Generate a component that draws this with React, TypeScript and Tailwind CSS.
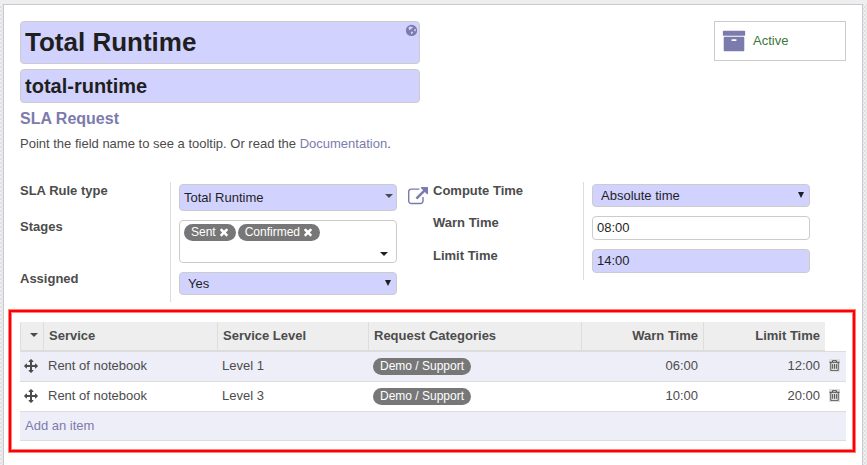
import type { ReactNode } from 'react';

const ICONS = {
  archive:
    'M1088 832q0-26-19-45t-45-19h-256q-26 0-45 19t-19 45 19 45 45 19h256q26 0 45-19t19-45zm576-192v960q0 26-19 45t-45 19h-1408q-26 0-45-19t-19-45v-960q0-26 19-45t45-19h1408q26 0 45 19t19 45zm64-448v256q0 26-19 45t-45 19h-1536q-26 0-45-19t-19-45v-256q0-26 19-45t45-19h1536q26 0 45 19t19 45z',
  move:
    'M1792 896q0 26-19 45l-256 256q-19 19-45 19t-45-19-19-45v-128h-384v384h128q26 0 45 19t19 45-19 45l-256 256q-19 19-45 19t-45-19l-256-256q-19-19-19-45t19-45 45-19h128v-384h-384v128q0 26-19 45t-45 19-45-19l-256-256q-19-19-19-45t19-45l256-256q19-19 45-19t45 19 19 45v128h384v-384h-128q-26 0-45-19t-19-45 19-45l256-256q19-19 45-19t45 19l256 256q19 19 19 45t-19 45-45 19h-128v384h384v-128q0-26 19-45t45-19 45 19l256 256q19 19 19 45z',
  trash:
    'M704 736v576q0 14-9 23t-23 9h-64q-14 0-23-9t-9-23v-576q0-14 9-23t23-9h64q14 0 23 9t9 23zm256 0v576q0 14-9 23t-23 9h-64q-14 0-23-9t-9-23v-576q0-14 9-23t23-9h64q14 0 23 9t9 23zm256 0v576q0 14-9 23t-23 9h-64q-14 0-23-9t-9-23v-576q0-14 9-23t23-9h64q14 0 23 9t9 23zm128 724v-948h-896v948q0 22 7 40.5t14.5 27 10.5 8.5h832q3 0 10.5-8.5t14.5-27 7-40.5zm-672-1076h448l-48-117q-7-9-17-11h-317q-10 2-17 11zm928 32v64q0 14-9 23t-23 9h-96v948q0 83-47 143.5t-113 60.5h-832q-66 0-113-58.5t-47-141.5v-952h-96q-14 0-23-9t-9-23v-64q0-14 9-23t23-9h309l70-167q15-37 54-63t79-26h320q40 0 79 26t54 63l70 167h309q14 0 23 9t9 23z',
  external:
    'M1408 928v320q0 119-84.5 203.5t-203.5 84.5h-832q-119 0-203.5-84.5t-84.5-203.5v-832q0-119 84.5-203.5t203.5-84.5h704q14 0 23 9t9 23v64q0 14-9 23t-23 9h-704q-66 0-113 47t-47 113v832q0 66 47 113t113 47h832q66 0 113-47t47-113v-320q0-14 9-23t23-9h64q14 0 23 9t9 23zm384-864v512q0 26-19 45t-45 19-45-19l-176-176-652 652q-10 10-23 10t-23-10l-114-114q-10-10-10-23t10-23l652-652-176-176q-19-19-19-45t19-45 45-19h512q26 0 45 19t19 45z',
  close:
    'M1490 1322q0 40-28 68l-136 136q-28 28-68 28t-68-28l-294-294-294 294q-28 28-68 28t-68-28l-136-136q-28-28-28-68t28-68l294-294-294-294q-28-28-28-68t28-68l136-136q28-28 68-28t68 28l294 294 294-294q28-28 68-28t68 28l136 136q28 28 28 68t-28 68l-294 294 294 294q28 28 28 68z',
  globe:
    'M896 100a780 780 0 1 0 0 1560a780 780 0 1 0 0-1560zM480 520l180-170 160-20 60 100 170-50 70 90-170 120-110 130-120 40-40 110-130-90zM800 1060l160-40 170 100-40 120-110 60-50 130-90-40-20-150zM1280 720l140-50 80 130-30 170-90 70-110-120z',
};

function Icon({ name, className }: { name: keyof typeof ICONS; className: string }) {
  return (
    <svg viewBox="0 0 1792 1792" className={className} fill="currentColor" fillRule="evenodd" aria-hidden="true">
      <path d={ICONS[name]} />
    </svg>
  );
}

function Caret({ className = '' }: { className?: string }) {
  return (
    <svg viewBox="0 0 8 4" className={`h-1 w-2 ${className}`} fill="currentColor" aria-hidden="true">
      <path d="M0 0h8L4 4z" />
    </svg>
  );
}

const box = 'w-full rounded-[4px] border border-[#ccc] text-[#1f1f1f] outline-none';

function Row({ label, id, children }: { label: string; id: string; children: ReactNode }) {
  return (
    <div className="flex">
      <label htmlFor={id} className="w-[150px] flex-none font-bold leading-[17px]">
        {label}
      </label>
      <div className="flex min-w-0 grow border-l border-[#ddd] pt-[2px] pb-[7px] pl-2">{children}</div>
    </div>
  );
}

function Select({ id, value }: { id: string; value: string }) {
  return (
    <div className="relative w-[218px] flex-none">
      <select id={id} defaultValue={value} className={`${box} h-[23px] appearance-none bg-[#d2d2ff] pr-5 pl-2`}>
        <option>{value}</option>
      </select>
      <svg
        viewBox="0 0 6 6"
        className="pointer-events-none absolute top-2 right-[6px] size-[6px]"
        fill="#1f1f1f"
        aria-hidden="true"
      >
        <path d="M0 0h6L3 6z" />
      </svg>
    </div>
  );
}

function Tag({ text, removable = false }: { text: string; removable?: boolean }) {
  return (
    <span className="inline-flex h-[17px] items-center gap-[3px] rounded-full bg-[#777] px-[7px] align-middle text-xs leading-[17px] text-white">
      {text}
      {removable && (
        <button type="button" aria-label={`Remove ${text}`} className="pb-px">
          <Icon name="close" className="-mx-px size-3" />
        </button>
      )}
    </span>
  );
}

const lines = [
  { service: 'Rent of notebook', level: 'Level 1', category: 'Demo / Support', warn: '06:00', limit: '12:00' },
  { service: 'Rent of notebook', level: 'Level 3', category: 'Demo / Support', warn: '10:00', limit: '20:00' },
];

const th = 'border-b border-l border-[#ddd] bg-[#eee] px-[5px] pb-[2px]';
const td = 'border-b border-[#ddd] px-[5px] pb-[2px]';

function Lines() {
  return (
    <table className="w-full table-fixed border-separate border-spacing-0 text-left leading-[17px]">
      <colgroup>
        <col className="w-[23px]" />
        <col className="w-[174px]" />
        <col className="w-[151px]" />
        <col />
        <col className="w-[122px]" />
        <col className="w-[122px]" />
        <col className="w-[21px]" />
      </colgroup>
      <thead>
        <tr>
          <th className="h-[29px] border-b border-l border-[#ddd] bg-[#eee] pb-[2px] pl-[9px]">
            <Caret />
          </th>
          <th className={th}>Service</th>
          <th className={th}>Service Level</th>
          <th className={th}>Request Categories</th>
          <th className={`${th} text-right`}>Warn Time</th>
          <th className={`${th} text-right`}>Limit Time</th>
          <td />
        </tr>
      </thead>
      <tbody>
        <tr>
          <td colSpan={7} className="h-px bg-[#ddd] p-0" />
        </tr>
        {lines.map((line) => (
          <tr key={line.level} className="odd:bg-white even:bg-[#eeeef8]">
            <td className="h-[30px] border-b border-[#ddd] pb-[2px] pl-1">
              <Icon name="move" className="size-[14px]" />
            </td>
            <td className={td}>{line.service}</td>
            <td className={td}>{line.level}</td>
            <td className={td}>
              <Tag text={line.category} />
            </td>
            <td className={`${td} text-right`}>{line.warn}</td>
            <td className={`${td} text-right`}>{line.limit}</td>
            <td className="border-b border-[#ddd] pb-[2px] pl-1">
              <button type="button" aria-label="Delete" className="flex h-[13px] w-[11px] items-center justify-center bg-[#ddd]">
                <Icon name="trash" className="size-[13px] flex-none" />
              </button>
            </td>
          </tr>
        ))}
        <tr className="bg-[#eeeef8]">
          <td colSpan={7} className={`${td} h-[29px]`}>
            <a href="#add" className="text-[#7c7bad]">
              Add an item
            </a>
          </td>
        </tr>
      </tbody>
    </table>
  );
}

export default function App() {
  return (
    <div className="flex min-h-screen flex-col bg-[#eee] bg-[repeating-conic-gradient(#e0e0e0_0_25%,#f0f0f0_0_50%)] bg-size-[4px_4px] font-['Liberation_Sans',Arial,sans-serif] text-[13px] text-[#4c4c4c]">
      <div className="h-1 bg-[#eee]" />
      <main className="mr-1 ml-[3px] grow border border-b-0 border-[#c8c8d3] bg-white px-4 pt-4">
        <header className="flex items-start justify-between">
          <div className="w-[400px]">
            <div className="relative">
              <input
                aria-label="Name"
                defaultValue="Total Runtime"
                className={`${box} block h-[43px] bg-[#d2d2ff] pr-6 pl-1 text-[26px] font-bold`}
              />
              <button type="button" aria-label="Translate" className="absolute top-[3px] right-[2px] text-[#7c7bad]">
                <Icon name="globe" className="size-[13px]" />
              </button>
            </div>
            <input
              aria-label="Code"
              defaultValue="total-runtime"
              className={`${box} mt-[5px] block h-[34px] bg-[#d2d2ff] px-1 text-xl font-bold`}
            />
            <h2 className="mt-[6px] text-base leading-5 font-bold text-[#7c7bad]">SLA Request</h2>
            <p className="mt-[5px] leading-5">
              Point the field name to see a tooltip. Or read the{' '}
              <a href="#documentation" className="text-[#7c7bad]">
                Documentation
              </a>
              .
            </p>
          </div>
          <button
            type="button"
            className="flex h-10 w-[132px] items-center gap-[7px] border border-[#ccc] pl-[7px] text-[#3c763d]"
          >
            <Icon name="archive" className="size-6 text-[#7c7bad]" />
            Active
          </button>
        </header>

        <div className="mt-7 grid grid-cols-2 items-start">
          <section>
            <Row label="SLA Rule type" id="rule-type">
              <div className="relative w-[218px] flex-none">
                <input
                  id="rule-type"
                  defaultValue="Total Runtime"
                  className={`${box} block h-[27px] bg-[#d2d2ff] pr-5 pl-1`}
                />
                <Caret className="pointer-events-none absolute top-[10px] right-1" />
              </div>
              <button type="button" aria-label="Open rule type" className="ml-[11px] flex-none pb-[2px] text-[#7c7bad]">
                <Icon name="external" className="size-5" />
              </button>
            </Row>
            <Row label="Stages" id="stages">
              <div className="relative h-[43px] w-[218px] flex-none rounded-[4px] border border-[#ccc] px-1 pt-[3px]">
                <div className="flex gap-[2px]">
                  <Tag text="Sent" removable />
                  <Tag text="Confirmed" removable />
                </div>
                <input id="stages" className="block h-[19px] w-[180px] outline-none" />
                <Caret className="pointer-events-none absolute right-2 bottom-[6px] text-[#1f1f1f]" />
              </div>
            </Row>
            <Row label="Assigned" id="assigned">
              <Select id="assigned" value="Yes" />
            </Row>
          </section>
          <section>
            <Row label="Compute Time" id="compute">
              <Select id="compute" value="Absolute time" />
            </Row>
            <Row label="Warn Time" id="warn">
              <div className="w-[218px]">
                <input id="warn" defaultValue="08:00" className={`${box} block h-6 bg-white px-1 pb-[2px]`} />
              </div>
            </Row>
            <Row label="Limit Time" id="limit">
              <div className="w-[218px]">
                <input id="limit" defaultValue="14:00" className={`${box} block h-6 bg-[#d2d2ff] px-1 pb-[2px]`} />
              </div>
            </Row>
          </section>
        </div>

        <section className="-mr-[9px] -ml-[11px] mt-2 border-2 border-[#f00] pt-[10px] pr-[7px] pb-[9px] pl-[9px] shadow-[0_0_0_1px_#ff8080,inset_0_0_0_1px_#ff8080]">
          <Lines />
        </section>
      </main>
    </div>
  );
}
